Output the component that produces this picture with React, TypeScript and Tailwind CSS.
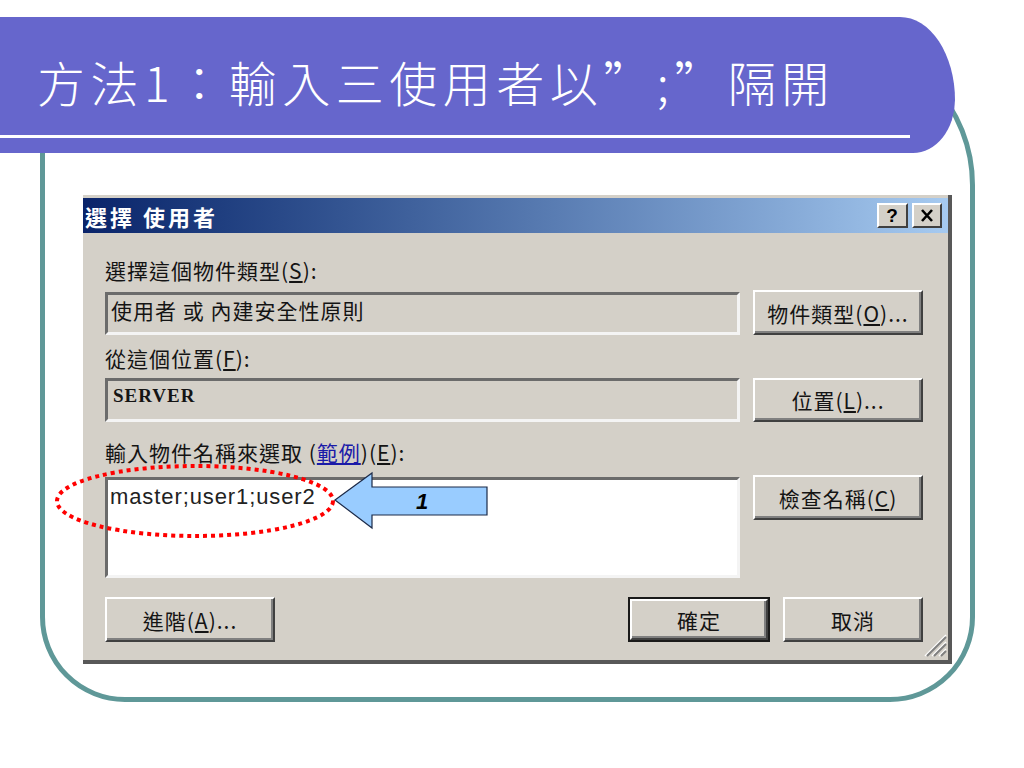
import React from "react";

function Btn({ className = "", children }: { className?: string; children: React.ReactNode }) {
  return (
    <div
      className={`flex items-center justify-center border-2 border-t-white border-l-white border-r-[#404040] border-b-[#404040] bg-[#d4d0c8] shadow-[inset_-2px_-2px_0_#808080] ${className}`}
    >
      {children}
    </div>
  );
}

const sunken =
  "border-[3px] border-t-[#6b6b6b] border-l-[#6b6b6b] border-r-[#f4f4f4] border-b-[#f4f4f4]";

function Dialog() {
  return (
    <div className="relative ml-[38px] mt-[155px] w-[869px] bg-[#d4d0c8] pt-[3px] border-r-4 border-b-4 border-r-[#585858] border-b-[#585858] font-['Noto_Sans_CJK_TC','Liberation_Sans',sans-serif] text-[21px] leading-[22px] tracking-[1px] text-[#141414]">
      {/* title bar */}
      <div className="flex h-[35px] items-center justify-between bg-linear-to-r from-[#0a246a] to-[#a6caf0] pl-[2px] pr-[6px]">
        <span className="text-[22px] font-bold tracking-[3px] text-white">選擇 使用者</span>
        <div className="flex gap-[4px]">
          <div className="flex h-[25px] w-[31px] items-center justify-center border-2 border-t-white border-l-white border-r-[#404040] border-b-[#404040] bg-[#d4d0c8] font-['Liberation_Sans',sans-serif] text-[19px] font-bold leading-none text-black">
            ?
          </div>
          <div className="flex h-[25px] w-[30px] items-center justify-center border-2 border-t-white border-l-white border-r-[#404040] border-b-[#404040] bg-[#d4d0c8]">
            <svg width="14" height="13" viewBox="0 0 14 13">
              <path d="M2 1 L12 12 M12 1 L2 12" stroke="#000" strokeWidth="2.6" />
            </svg>
          </div>
        </div>
      </div>

      {/* body */}
      <div className="pl-[22px] pr-[25px] pb-[18px]">
        <div className="mt-[26px] h-[22px] whitespace-nowrap">
          選擇這個物件類型(<span className="underline">S</span>):
        </div>
        <div className="mt-[9px] flex items-start gap-[13px]">
          <div className={`mt-[2px] h-[43px] flex-1 ${sunken} pl-[3px] pt-[4px] whitespace-nowrap`}>
            使用者 或 內建安全性原則
          </div>
          <Btn className="h-[45px] w-[170px]">
            物件類型(<span className="underline">O</span>)...
          </Btn>
        </div>

        <div className="mt-[12px] h-[22px] whitespace-nowrap">
          從這個位置(<span className="underline">F</span>):
        </div>
        <div className="mt-[9px] flex items-start gap-[13px]">
          <div
            className={`h-[44px] flex-1 ${sunken} pl-[5px] pt-[4px] font-['Liberation_Serif',serif] text-[19px] font-bold tracking-[1px]`}
          >
            SERVER
          </div>
          <Btn className="h-[44px] w-[170px]">
            位置(<span className="underline">L</span>)...
          </Btn>
        </div>

        <div className="mt-[19px] h-[22px] whitespace-nowrap">
          輸入物件名稱來選取 (<span className="text-[#1a1aa8] underline">範例</span>)(
          <span className="underline">E</span>):
        </div>
        <div className="mt-[12px] flex items-start gap-[13px]">
          <div
            className={`mt-[2px] h-[101px] flex-1 bg-white ${sunken} pl-[2px] pt-[5px] font-['Liberation_Sans',sans-serif] text-[22px] leading-[24px] tracking-[0.9px] text-[#222]`}
          >
            master;user1;user2
          </div>
          <Btn className="h-[45px] w-[170px]">
            檢查名稱(<span className="underline">C</span>)
          </Btn>
        </div>

        <div className="mt-[19px] flex items-start justify-between">
          <Btn className="h-[45px] w-[170px]">
            進階(<span className="underline">A</span>)...
          </Btn>
          <div className="flex gap-[13px]">
            <div className="h-[45px] w-[142px] border-2 border-[#1a1a1a]">
              <Btn className="h-full w-full">確定</Btn>
            </div>
            <Btn className="h-[45px] w-[140px]">取消</Btn>
          </div>
        </div>
      </div>

      {/* resize grip */}
      <svg className="absolute bottom-[3px] right-[1px]" width="25" height="25" viewBox="0 0 25 25">
        <path d="M24 3 L3 24" stroke="#ffffff" strokeWidth="1.5" />
        <path d="M24 5 L5 24" stroke="#808080" strokeWidth="2" />
        <path d="M24 10 L10 24" stroke="#ffffff" strokeWidth="1.5" />
        <path d="M24 12 L12 24" stroke="#808080" strokeWidth="2" />
        <path d="M24 17 L17 24" stroke="#ffffff" strokeWidth="1.5" />
        <path d="M24 19 L19 24" stroke="#808080" strokeWidth="2" />
      </svg>
    </div>
  );
}

export default function App() {
  return (
    <div className="relative h-[768px] w-[1024px] overflow-hidden bg-white">
      {/* teal rounded frame */}
      <div className="ml-[40px] mt-[35px] h-[667px] w-[935px] rounded-tl-[30px] rounded-tr-[150px] rounded-br-[85px] rounded-bl-[85px] border-[5px] border-[#5f9898]">
        <Dialog />
      </div>

      {/* title banner */}
      <div className="absolute left-0 top-[17px] z-10 h-[136px] w-[955px] rounded-tr-[55px_83px] rounded-br-[42px_53px] bg-[#6666cc]">
        <div className="whitespace-nowrap pl-[37px] pt-[40px] font-['Noto_Sans_CJK_TC',sans-serif] text-[48px] font-light leading-[48px] tracking-[5.5px] text-white">
          方法1：輸入三使用者以”;”隔開
        </div>
        <div className="mt-[30px] h-[3px] w-[910px] bg-white" />
      </div>

      {/* annotations */}
      <svg className="pointer-events-none absolute left-0 top-0 z-20" width="1024" height="768">
        <ellipse
          cx="195"
          cy="501"
          rx="138"
          ry="35"
          fill="none"
          stroke="#ff0000"
          strokeWidth="4"
          strokeDasharray="4 4"
        />
        <polygon
          points="335,500 372,473 372,487 487,487 487,515 372,515 372,528"
          fill="#99ccff"
          stroke="#1c2a48"
          strokeWidth="1.2"
        />
        <text
          x="422"
          y="509"
          fontFamily="Liberation Sans, Arial, sans-serif"
          fontWeight="bold"
          fontStyle="italic"
          fontSize="22"
          textAnchor="middle"
          fill="#000"
        >
          1
        </text>
      </svg>
    </div>
  );
}
